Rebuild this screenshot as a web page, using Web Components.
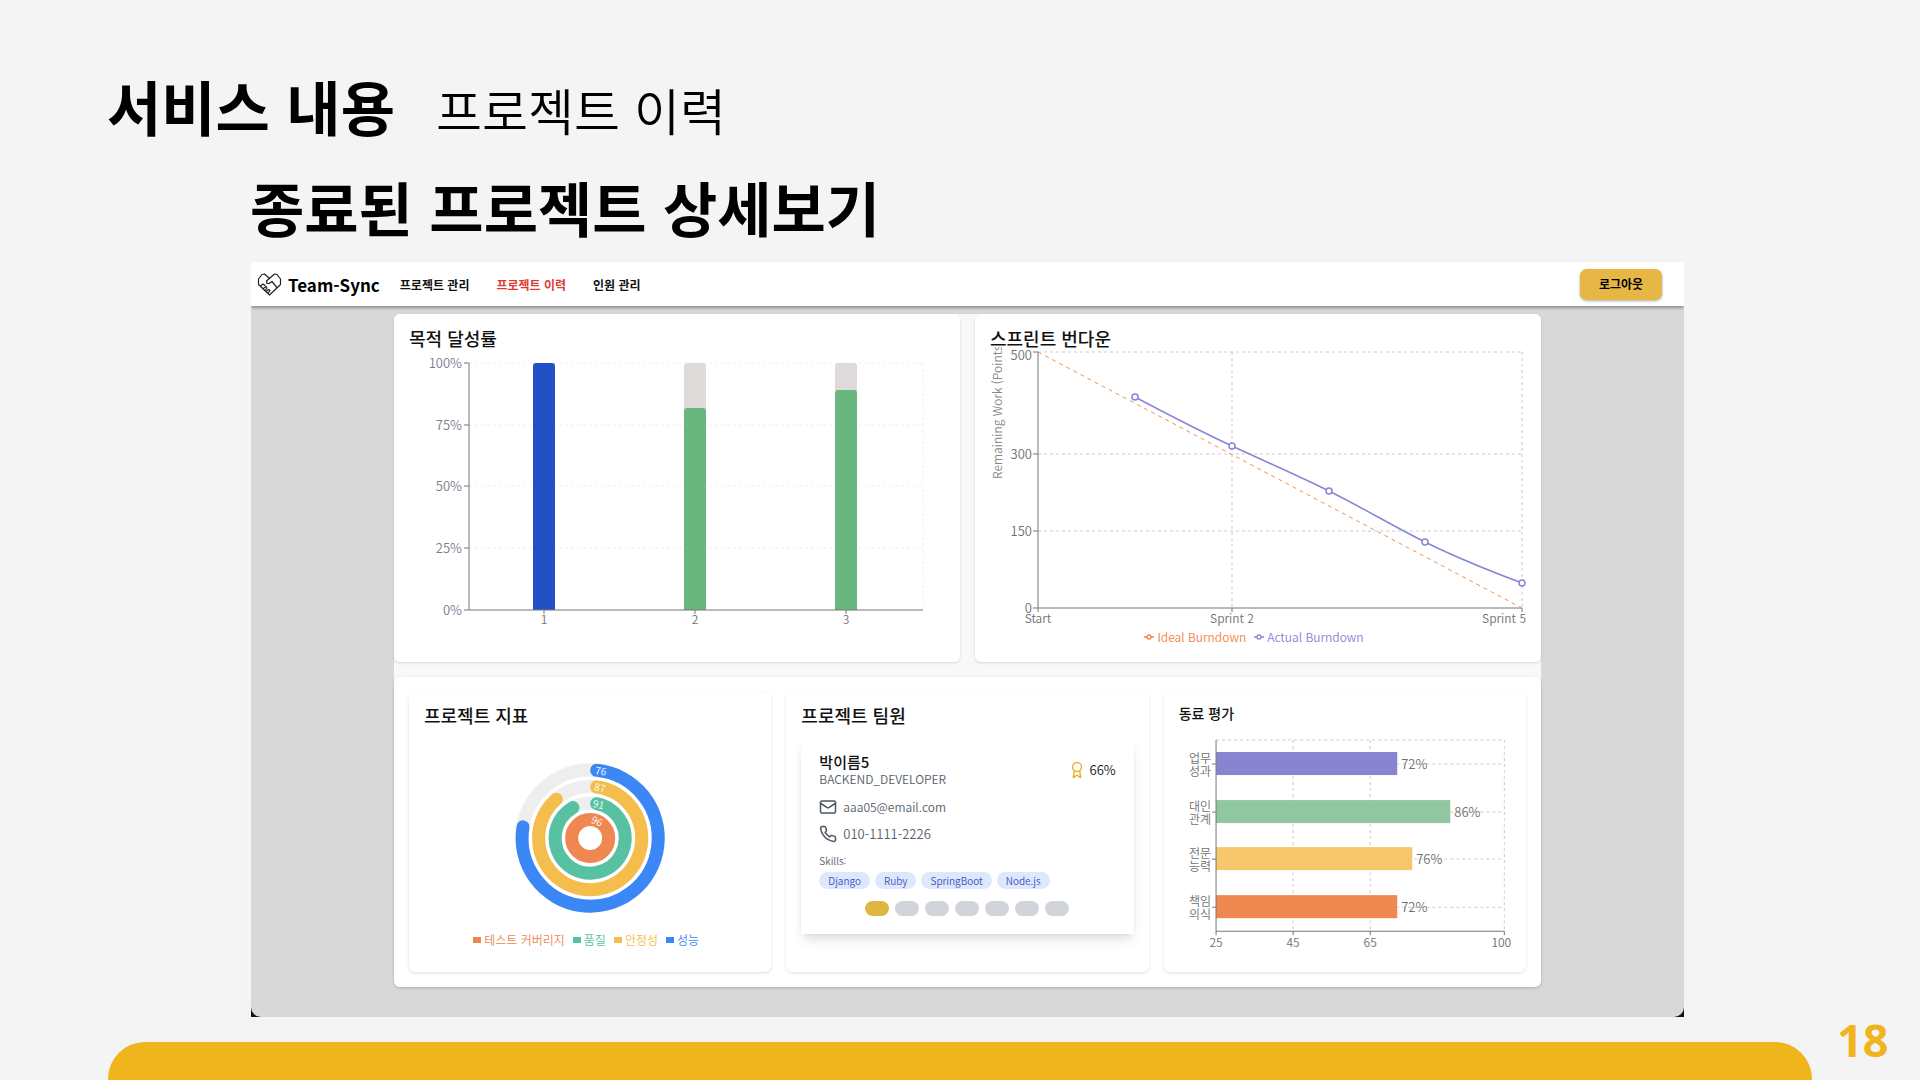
<!DOCTYPE html>
<html lang="ko">
<head>
<meta charset="utf-8">
<title>Team-Sync 서비스 내용</title>
<style>
  html, body { margin: 0; height: 100%; }
  body { font-family: "Noto Sans CJK KR", sans-serif; background: #f4f4f4; color: #000; }
</style>
</head>
<body>
<report-slide>
  <span slot="section">서비스 내용</span>
  <span slot="topic">프로젝트 이력</span>
  <span slot="title">종료된 프로젝트 상세보기</span>
  <span slot="page">18</span>
  <app-window>
    <app-header slot="header"></app-header>
    <chart-card slot="top" heading="목적 달성률"><goal-chart></goal-chart></chart-card>
    <chart-card slot="top" heading="스프린트 번다운"><burndown-chart></burndown-chart></chart-card>
    <chart-card slot="bottom" class="small" heading="프로젝트 지표"><metric-rings></metric-rings></chart-card>
    <chart-card slot="bottom" class="small" heading="프로젝트 팀원"><member-card></member-card></chart-card>
    <chart-card slot="bottom" class="small minor" heading="동료 평가"><peer-chart></peer-chart></chart-card>
  </app-window>
</report-slide>

<script>
function define(name, html) {
  const template = document.createElement('template');
  template.innerHTML = html;
  customElements.define(name, class extends HTMLElement {
    constructor() {
      super();
      this.attachShadow({ mode: 'open' }).append(template.content.cloneNode(true));
    }
    connectedCallback() {
      const heading = this.shadowRoot.querySelector('[data-heading]');
      if (heading) heading.textContent = this.getAttribute('heading');
    }
  });
}

const line = (x1, y1, x2, y2, cls) => `<line class="${cls}" x1="${x1}" y1="${y1}" x2="${x2}" y2="${y2}"/>`;
const text = (x, y, s, cls = '') => `<text class="${cls}" x="${x}" y="${y}">${s}</text>`;
const chartStyle = `
  :host { display: block; font-weight: 350; }
  svg { display: block; width: 100%; height: auto; }
  text { font-size: 12px; fill: #707070; }
  .end { text-anchor: end; }
  .mid { text-anchor: middle; }
  .axis { stroke: #777; }
  .grid { stroke: #ccc; stroke-dasharray: 3 3; }
  .legend { display: flex; justify-content: center; gap: 8px; margin: 0; padding: 0; list-style: none; font-size: 12px; line-height: 18px; }
  .legend li { display: flex; align-items: center; gap: 3px; }
`;

define('report-slide', `
  <style>
    :host { display: flex; flex-direction: column; min-height: 100vh; box-sizing: border-box; }
    header { display: flex; align-items: baseline; gap: 41px; padding: 62px 107px 0; }
    h1, h2, p { margin: 0; }
    h1 { font-size: 59px; line-height: 88px; font-weight: 700; }
    p { font-size: 50px; line-height: 88px; font-weight: 350; }
    h2 { font-size: 59px; line-height: 88px; font-weight: 700; padding: 10px 0 11px 250px; }
    main { margin: 0 236px 0 251px; }
    footer { display: flex; align-items: flex-start; margin-top: auto; padding-left: 108px; height: 62px; }
    .bar { flex: 1; height: 38px; margin-top: 24px; border-radius: 37px 37px 0 0; background: #f0b51c; }
    .page { width: 108px; box-sizing: border-box; padding-left: 25px; font: 700 45px/44px "Open Sans", sans-serif; color: #f0b51c; }
  </style>
  <header><h1><slot name="section"></slot></h1><p><slot name="topic"></slot></p></header>
  <h2><slot name="title"></slot></h2>
  <main><slot></slot></main>
  <footer><div class="bar"></div><div class="page"><slot name="page"></slot></div></footer>
`);

define('app-window', `
  <style>
    :host { display: block; background: #111; }
    .body { background: #d8d8d8; border-radius: 0 0 10px 10px; padding: 8px 143px 30px; }
    .content { background: #f8f8f8; display: flex; flex-direction: column; gap: 15px; border-radius: 6px; }
    .top { display: grid; grid-template-columns: 1fr 1fr; gap: 15px; }
    .bottom { display: grid; grid-template-columns: repeat(3, 1fr); gap: 15px; padding: 15px; background: #fff; border-radius: 6px; box-shadow: 0 1px 3px #0003; }
  </style>
  <slot name="header"></slot>
  <div class="body"><div class="content">
    <div class="top"><slot name="top"></slot></div>
    <div class="bottom"><slot name="bottom"></slot></div>
  </div></div>
`);

define('app-header', `
  <style>
    :host { display: flex; align-items: center; height: 44px; padding: 0 22px 0 6px; background: #fff; position: relative; box-shadow: 0 2px 3px #0005; clip-path: inset(0 0 -6px); }
    .brand { display: flex; align-items: center; gap: 6px; font-size: 17px; font-weight: 700; color: #000; text-decoration: none; }
    .brand svg { width: 25px; height: 25px; }
    nav { display: flex; gap: 27px; margin-left: 20px; flex: 1; }
    nav a { font-size: 12px; font-weight: 700; color: #111; text-decoration: none; }
    nav a.active { color: #dc3b35; }
    button { width: 82px; height: 31px; border: 0; border-radius: 7px; background: #e6b745; color: #000; font: 700 12px/18px "Noto Sans CJK KR", sans-serif; box-shadow: 0 1px 3px #0005; }
  </style>
  <a class="brand" href="#">
    <svg viewBox="0 0 25 25" fill="none" stroke="#222" stroke-width="1.2" stroke-linejoin="round" stroke-linecap="round">
      <path d="M12.500 6.500 7.500 2 5 2.500 1.500 7v5.500L12.500 23l11-10.500V7L20 2.500 17.500 2l-8 7 .5 2.300 2 .2 3-2 4.500 5.500M3.500 14l2.500-2 2 1.500M6 16.800l3-2.300 1 1.500-2 2.500M9 19.500l2.500-2 1.500 1-2 3"/>
    </svg>Team-Sync</a>
  <nav><a href="#">프로젝트 관리</a><a href="#" class="active">프로젝트 이력</a><a href="#">인원 관리</a></nav>
  <button type="button">로그아웃</button>
`);

define('chart-card', `
  <style>
    :host { display: block; box-sizing: border-box; min-height: 348px; padding: 9px 15px 0; background: #fff; border-radius: 6px; box-shadow: 0 1px 3px #0002; min-width: 0; }
    :host(.small) { min-height: 280px; padding-top: 7px; }
    h3 { margin: 0; font-size: 18px; line-height: 30px; font-weight: 500; color: #111; }
    :host(.small) h3 { line-height: 32px; }
    :host(.minor) h3 { font-size: 14px; line-height: 28px; }
  </style>
  <h3 data-heading></h3><slot></slot>
`);

{
  const ys = [10, 72, 133, 195, 257];
  let s = '';
  ys.slice(0, 4).forEach(y => s += line(60, y, 514, y, 'grid'));
  s += line(514, 10, 514, 257, 'grid');
  const bar = (x, y, color) => `<path d="M${x} 257V${y + 3}q0-3 3-3h16q3 0 3 3V257z" fill="${color}"/>`;
  s += bar(124, 10, '#2151c4');
  s += bar(275, 10, '#dfdbdb') + bar(275, 55, '#69b77f');
  s += bar(426, 10, '#dfdbdb') + bar(426, 37, '#69b77f');
  s += line(60, 10, 60, 257, 'axis') + line(60, 257, 514, 257, 'axis');
  ['100%', '75%', '50%', '25%', '0%'].forEach((t, i) => {
    s += line(55, ys[i], 60, ys[i], 'axis') + text(53, ys[i] + 5, t, 'end pct');
  });
  [135, 286, 437].forEach((x, i) => { s += line(x, 257, x, 261, 'axis') + text(x, 271, i + 1, 'mid'); });
  define('goal-chart', `<style>${chartStyle} .grid { stroke: #f0f0f0; } .pct { font-size: 13px; fill: #787d8a; }</style>
    <svg viewBox="0 0 536 280" role="img" aria-label="목적 달성률">${s}</svg>`);
}

{
  const pts = [[145, 50], [242, 99], [339, 144], [435, 195], [532, 236]];
  let s = '';
  [5, 107, 184].forEach(y => s += line(48, y, 532, y, 'grid'));
  [242, 532].forEach(x => s += line(x, 5, x, 261, 'grid'));
  s += line(48, 5, 48, 261, 'axis') + line(48, 261, 532, 261, 'axis');
  [[5, 500, 13], [107, 300, 112], [184, 150, 189], [261, 0, 266]].forEach(([y, t, ty]) => {
    s += line(43, y, 48, y, 'axis') + text(42, ty, t, 'end num');
  });
  [48, 242, 532].forEach(x => s += line(x, 261, x, 265, 'axis'));
  s += text(48, 276, 'Start', 'mid') + text(242, 276, 'Sprint 2', 'mid') + text(536, 276, 'Sprint 5', 'end');
  s += '<text class="side" transform="translate(12 132) rotate(-90)">Remaining Work (Points)</text>';
  s += '<path d="M48 5 532 261" stroke="#f58f50" stroke-dasharray="4 4" fill="none"/>';
  s += '<path d="M145 50C177 67 210 84 242 99S307 128 339 144S403 179 435 195S500 224 532 236" stroke="#8884d8" stroke-width="1.500" fill="none"/>';
  pts.forEach(([x, y]) => s += `<circle cx="${x}" cy="${y}" r="3" fill="#fff" stroke="#8884d8" stroke-width="1.500"/>`);
  const key = c => `<svg class="key" viewBox="0 0 10 8" fill="none" stroke="${c}" stroke-width="1.300"><path d="M0 4h3M7 4h3"/><circle cx="5" cy="4" r="2"/></svg>`;
  define('burndown-chart', `<style>${chartStyle}
      svg { margin-top: -6px; } .num { font-size: 13px; } .side { fill: #888; }
      .legend { padding-right: 8px; } .legend .key { width: 10px; height: 8px; margin: 0; }
    </style>
    <svg viewBox="0 0 536 281" role="img" aria-label="스프린트 번다운">${s}</svg>
    <ul class="legend"><li style="color:#f58442">${key('#f58442')}Ideal Burndown</li><li style="color:#8884d8">${key('#8884d8')}Actual Burndown</li></ul>`);
}

{
  const cx = 166, cy = 107, w = 13;
  const rings = [[68, 76, '#3b87f6', 9], [51.5, 87, '#f4bd4c', 11], [35, 91, '#58c1a1', 14], [18.5, 96, '#ef8750', 22]];
  const at = (r, a) => `${cx + r * Math.sin(a)} ${cy - r * Math.cos(a)}`;
  let s = '';
  rings.forEach(([r, v, color, turn]) => {
    s += `<circle cx="${cx}" cy="${cy}" r="${r}" fill="none" stroke="#eee" stroke-width="${w}"/>`;
    if (v === 96) s += `<circle cx="${cx}" cy="${cy}" r="${r}" fill="none" stroke="${color}" stroke-width="${w}"/>`;
    else {
      const cap = w / 2 / r, end = v / 96 * 2 * Math.PI - cap;
      s += `<path d="M${at(r, cap)}A${r} ${r} 0 1 1 ${at(r, end)}" fill="none" stroke="${color}" stroke-width="${w}" stroke-linecap="round"/>`;
    }
    s += `<text class="mid" x="${cx}" y="${cy - r + 4}" transform="rotate(${turn} ${cx} ${cy})">${v}</text>`;
  });
  const item = (c, t) => `<li style="color:${c}"><i></i>${t}</li>`;
  define('metric-rings', `<style>${chartStyle}
      text { font-size: 10px; fill: #fff; }
      .legend { padding-right: 8px; } i { width: 8px; height: 6px; background: currentColor; }
    </style>
    <svg viewBox="0 0 332 200" role="img" aria-label="프로젝트 지표">${s}</svg>
    <ul class="legend">${item('#ef8750', '테스트 커버리지')}${item('#58c1a1', '품질')}${item('#f4bd4c', '안정성')}${item('#3b87f6', '성능')}</ul>`);
}

define('member-card', `
  <style>
    :host { display: block; box-sizing: border-box; margin-top: 8px; height: 195px; padding: 14px 18px; background: #fff; color: #555e6b; font-size: 12px; line-height: 16px; font-weight: 350; box-shadow: 0 8px 12px -3px #0002, 0 2px 6px -2px #0001; }
    p, h4, ul { margin: 0; padding: 0; }
    .head { display: flex; justify-content: space-between; align-items: center; }
    h4 { font-size: 15px; line-height: 18px; font-weight: 500; color: #111; }
    .rate { display: flex; align-items: center; gap: 4px; font-size: 13px; color: #111; }
    svg { width: 18px; height: 18px; fill: none; stroke: #4b5563; stroke-width: 2; stroke-linecap: round; stroke-linejoin: round; }
    .rate svg { stroke: #e8b33a; }
    .row { display: flex; align-items: center; gap: 6px; height: 18px; }
    .mail { margin-top: 11px; }
    .phone { margin-top: 9px; font-size: 13px; }
    .label { margin-top: 10px; font-size: 10px; line-height: 15px; }
    .tags { display: flex; gap: 5px; margin-top: 4px; list-style: none; }
    .tags li { padding: 0 9px; border-radius: 9px; background: #dde8fc; color: #3c52bc; font-size: 10px; line-height: 17px; }
    .pager { display: flex; justify-content: center; gap: 6px; margin-top: 12px; }
    .pager button { width: 24px; height: 15px; padding: 0; border: 0; border-radius: 8px; background: #d1d5da; }
    .pager button:first-child { background: #ddb740; }
  </style>
  <div class="head">
    <div><h4>박이름5</h4><p>BACKEND_DEVELOPER</p></div>
    <div class="rate"><svg viewBox="0 0 24 24"><circle cx="12" cy="8" r="6"/><path d="m15.477 12.890 1.515 8.526a.5.5 0 0 1-.81.470l-3.580-2.687a1 1 0 0 0-1.197 0l-3.586 2.686a.5.5 0 0 1-.81-.469l1.514-8.526"/></svg>66%</div>
  </div>
  <div class="row mail"><svg viewBox="0 0 24 24"><rect x="2" y="4" width="20" height="16" rx="2"/><path d="m22 7-8.970 5.700a1.940 1.940 0 0 1-2.060 0L2 7"/></svg>aaa05@email.com</div>
  <div class="row phone"><svg viewBox="0 0 24 24"><path d="M22 16.920v3a2 2 0 0 1-2.180 2 19.790 19.790 0 0 1-8.630-3.070 19.500 19.500 0 0 1-6-6 19.790 19.790 0 0 1-3.070-8.670A2 2 0 0 1 4.110 2h3a2 2 0 0 1 2 1.720 12.840 12.840 0 0 0 .7 2.810 2 2 0 0 1-.45 2.110L8.090 9.910a16 16 0 0 0 6 6l1.270-1.270a2 2 0 0 1 2.110-.45 12.840 12.840 0 0 0 2.810.7A2 2 0 0 1 22 16.920z"/></svg>010-1111-2226</div>
  <p class="label">Skills:</p>
  <ul class="tags"><li>Django</li><li>Ruby</li><li>SpringBoot</li><li>Node.js</li></ul>
  <div class="pager">${[1, 2, 3, 4, 5, 6, 7].map(n => `<button type="button" aria-label="${n}"></button>`).join('')}</div>
`);

{
  const rows = [[29, 218, '72%', '#8884d0', '업무', '성과'], [77, 271, '86%', '#91c7a0', '대인', '관계'], [124, 233, '76%', '#f6c76b', '전문', '능력'], [172, 218, '72%', '#ef8750', '책임', '의식']];
  let s = '';
  [114, 191, 325].forEach(x => s += line(x, 5, x, 196, 'grid'));
  s += line(37, 5, 325, 5, 'grid');
  rows.forEach(([y, end, v, color, a, b]) => {
    s += line(37, y, 325, y, 'grid') + line(33, y, 37, y, 'axis');
    s += `<rect x="37" y="${y - 12}" width="${end - 37}" height="23" fill="${color}"/>`;
    s += text(end + 4, y + 5, v, 'val') + text(32, y - 1, a, 'end') + text(32, y + 12, b, 'end');
  });
  s += line(37, 5, 37, 196, 'axis') + line(37, 196, 325, 196, 'axis');
  [[37, 25], [114, 45], [191, 65], [325, 100]].forEach(([x, t]) => {
    s += line(x, 196, x, 200, 'axis') + text(t === 100 ? 322 : x, 212, t, 'mid');
  });
  define('peer-chart', `<style>${chartStyle} :host { margin-top: 8px; } .val { font-size: 13px; }</style>
    <svg viewBox="0 0 332 225" role="img" aria-label="동료 평가">${s}</svg>`);
}
</script>
</body>
</html>
